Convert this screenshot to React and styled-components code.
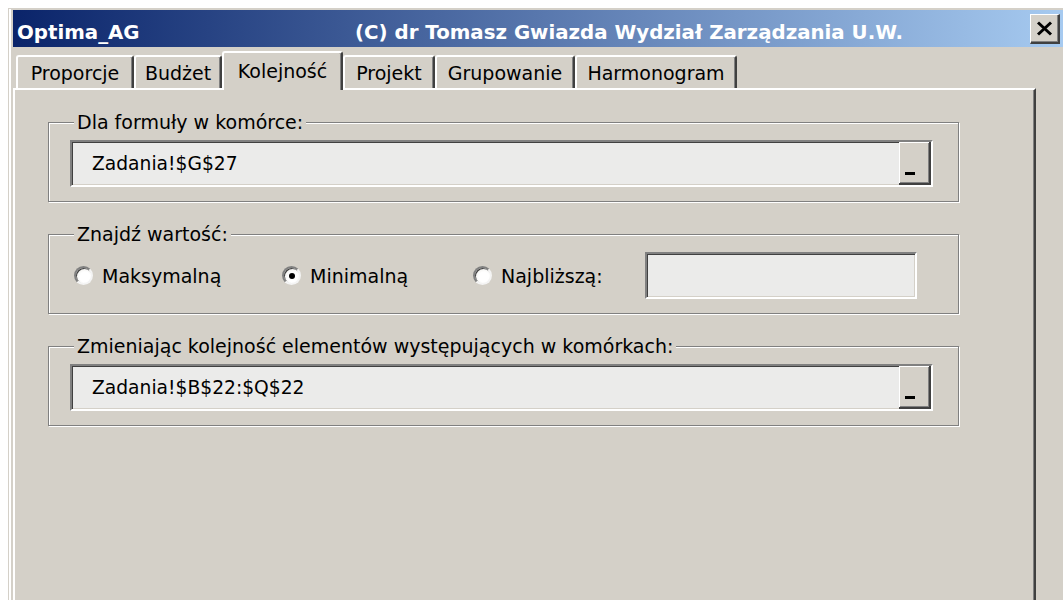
import React from 'react';
import styled, { createGlobalStyle } from 'styled-components';

const GlobalStyle = createGlobalStyle`
  html, body {
    margin: 0;
    padding: 0;
    background: #ffffff;
    overflow: hidden;
  }
  body {
    margin: 8px 0 0 8px;
    font-family: "DejaVu Sans", Verdana, sans-serif;
    color: #000;
  }
`;

const FACE = '#d4d0c8';

/* Window frame: raised classic border, content inset; runs on past the page edge */
const Window = styled.div`
  box-sizing: border-box;
  width: 1055px;
  height: 592px;
  display: flex;
  flex-direction: column;
  background: ${FACE};
  border-top: 1px solid ${FACE};
  border-left: 1px solid ${FACE};
  padding: 1px 0 0 4px;
  box-shadow: inset 2px 0 0 #ffffff;
`;

const TitleBar = styled.div`
  display: flex;
  align-items: center;
  flex: none;
  height: 37px;
  padding: 0 3px 0 4px;
  background: linear-gradient(to right, #0a246a, #a6caf0);
  color: #ffffff;
  font-weight: bold;
  font-size: 19.8px;
  white-space: nowrap;
`;

const TitleText = styled.span`
  display: inline-block;
  padding-top: 7px;
  width: ${p => (p.$w ? `${p.$w}px` : 'auto')};
`;

const CloseButton = styled.div`
  box-sizing: border-box;
  margin-left: auto;
  width: 30px;
  height: 30px;
  background: ${FACE};
  border-top: 1px solid #ffffff;
  border-left: 1px solid #ffffff;
  border-right: 2px solid #404040;
  border-bottom: 2px solid #404040;
  box-shadow: inset -1px -1px 0 #808080;
  display: flex;
  align-items: center;
  justify-content: center;
`;

const TabControl = styled.div`
  flex: 1;
  min-height: 0;
  width: 1023px;
  display: flex;
  flex-direction: column;
`;

const TabRow = styled.div`
  display: flex;
  align-items: flex-end;
  flex: none;
  height: 41px;
  padding-left: 3px;
`;

const Tab = styled.div`
  box-sizing: border-box;
  position: relative;
  z-index: ${p => (p.$active ? 2 : 1)};
  width: ${p => p.$w}px;
  height: ${p => (p.$active ? 39 : 33)}px;
  margin-bottom: ${p => (p.$active ? -2 : 0)}px;
  padding-bottom: ${p => (p.$active ? 1 : 0)}px;
  background: ${FACE};
  border-top: 2px solid #ffffff;
  border-left: 2px solid #ffffff;
  border-right: 2px solid #404040;
  box-shadow: inset -1px 0 0 #808080;
  border-top-left-radius: 3px;
  border-top-right-radius: 3px;
  display: flex;
  align-items: center;
  justify-content: center;
  font-size: 19px;
  white-space: nowrap;
`;

const Panel = styled.div`
  box-sizing: border-box;
  flex: 1;
  border-top: 2px solid #ffffff;
  border-left: 2px solid #ffffff;
  border-right: 2px solid #404040;
  box-shadow: inset -1px 0 0 #808080;
  padding: 32px 0 0 33px;
  display: flex;
  flex-direction: column;
  gap: 32px;
`;

/* Etched group box with caption over its top edge */
const Group = styled.div`
  position: relative;
  box-sizing: border-box;
  width: 911px;
  border: 1px solid #808080;
  box-shadow: 1px 1px 0 #ffffff, inset 1px 1px 0 #ffffff;
  padding: 17px 25px 14px ${p => p.$pl ?? 21}px;
  display: flex;
  align-items: center;
`;

const Legend = styled.span`
  position: absolute;
  left: 25px;
  top: -1px;
  transform: translateY(-50%);
  padding: 0 3px;
  background: ${FACE};
  font-size: 19px;
  line-height: 22px;
  white-space: nowrap;
`;

/* Sunken edit box */
const Field = styled.div`
  box-sizing: border-box;
  flex: ${p => (p.$w ? 'none' : '1')};
  width: ${p => (p.$w ? `${p.$w}px` : 'auto')};
  height: 47px;
  background: #ebebea;
  border: 2px solid;
  border-color: #808080 #ffffff #ffffff #808080;
  box-shadow: inset 1px 1px 0 #404040, inset -1px -1px 0 ${FACE};
  display: flex;
  align-items: stretch;
`;

const FieldText = styled.span`
  flex: 1;
  display: flex;
  align-items: center;
  padding-left: 20px;
  font-size: 18.7px;
  white-space: nowrap;
`;

const RefButton = styled.div`
  box-sizing: border-box;
  width: 32px;
  background: ${FACE};
  border-right: 2px solid #404040;
  border-bottom: 2px solid #404040;
  box-shadow: inset 1px 1px 0 #ffffff, inset -1px -1px 0 #808080;
  display: flex;
  align-items: flex-end;
  padding: 0 0 8px 6px;
`;

const RefMark = styled.span`
  display: block;
  width: 10px;
  height: 3px;
  background: #000;
`;

const Option = styled.label`
  display: flex;
  align-items: center;
  gap: 9px;
  width: ${p => p.$w}px;
  font-size: 19px;
  white-space: nowrap;
`;

const Radio = styled.span`
  box-sizing: border-box;
  position: relative;
  width: 19px;
  height: 19px;
  border-radius: 50%;
  border: 2px solid;
  border-color: #808080 #f4f4f4 #f4f4f4 #808080;
  background: radial-gradient(circle at 60% 60%, #ffffff 40%, #e6e4de 100%);
  box-shadow: inset 1px 1px 0 #404040;

  &::after {
    content: '';
    display: ${p => (p.$checked ? 'block' : 'none')};
    position: absolute;
    left: 50%;
    top: 50%;
    width: 6px;
    height: 6px;
    margin: -3px 0 0 -3px;
    border-radius: 50%;
    background: #000;
  }
`;

const tabs = [
  { label: 'Proporcje', w: 118 },
  { label: 'Budżet', w: 88 },
  { label: 'Kolejność', w: 121, active: true },
  { label: 'Projekt', w: 92 },
  { label: 'Grupowanie', w: 140 },
  { label: 'Harmonogram', w: 162 },
];

const options = [
  { label: 'Maksymalną', w: 208 },
  { label: 'Minimalną', w: 191, checked: true },
  { label: 'Najbliższą:', w: 172 },
];

const CloseGlyph = () => (
  <svg width="17" height="15" viewBox="0 0 17 15">
    <path d="M2 1.5 L15 13.5 M15 1.5 L2 13.5" stroke="#000" strokeWidth="3" fill="none" />
  </svg>
);

const RefEdit = ({ value }) => (
  <Field>
    <FieldText>{value}</FieldText>
    <RefButton>
      <RefMark />
    </RefButton>
  </Field>
);

export default function App() {
  return (
    <>
      <GlobalStyle />
      <Window>
        <TitleBar>
          <TitleText $w={338}>Optima_AG</TitleText>
          <TitleText>(C) dr Tomasz Gwiazda Wydział Zarządzania U.W.</TitleText>
          <CloseButton>
            <CloseGlyph />
          </CloseButton>
        </TitleBar>
        <TabControl>
          <TabRow>
            {tabs.map(t => (
              <Tab key={t.label} $w={t.w} $active={t.active}>
                {t.label}
              </Tab>
            ))}
          </TabRow>
          <Panel>
            <Group>
              <Legend>Dla formuły w komórce:</Legend>
              <RefEdit value="Zadania!$G$27" />
            </Group>
            <Group $pl={25}>
              <Legend>Znajdź wartość:</Legend>
              {options.map(o => (
                <Option key={o.label} $w={o.w}>
                  <Radio $checked={o.checked} />
                  {o.label}
                </Option>
              ))}
              <Field $w={272} />
            </Group>
            <Group>
              <Legend>Zmieniając kolejność elementów występujących w komórkach:</Legend>
              <RefEdit value="Zadania!$B$22:$Q$22" />
            </Group>
          </Panel>
        </TabControl>
      </Window>
    </>
  );
}
